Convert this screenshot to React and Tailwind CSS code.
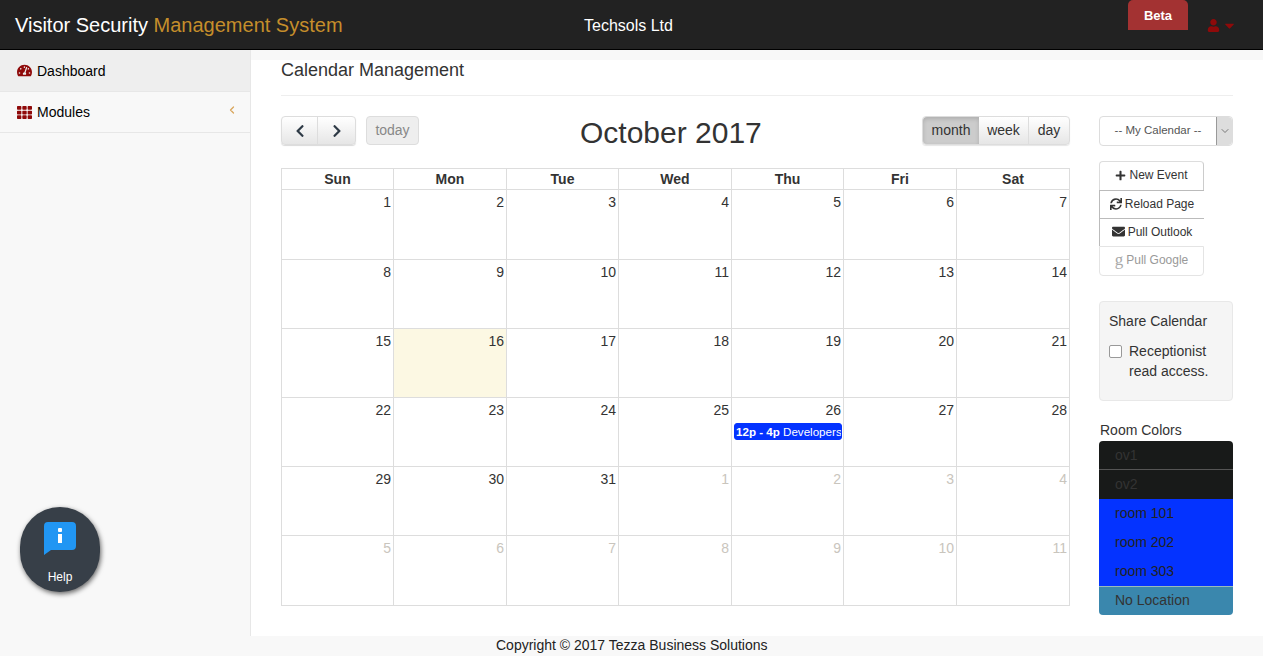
import React from 'react'
import { FaTachometerAlt, FaTh, FaUser, FaPlus, FaSync, FaEnvelope, FaChevronLeft, FaChevronRight, FaCaretDown } from 'react-icons/fa'
import { ChevronLeft, ChevronDown } from 'lucide-react'

const DAYS = ['Sun', 'Mon', 'Tue', 'Wed', 'Thu', 'Fri', 'Sat']

const WEEKS = [
  [1, 2, 3, 4, 5, 6, 7],
  [8, 9, 10, 11, 12, 13, 14],
  [15, 16, 17, 18, 19, 20, 21],
  [22, 23, 24, 25, 26, 27, 28],
  [29, 30, 31, -1, -2, -3, -4],
  [-5, -6, -7, -8, -9, -10, -11]
]

const ROOMS = [
  { name: 'ov1', cls: 'bg-[#181a19] text-[#333] border-b border-[#555]' },
  { name: 'ov2', cls: 'bg-[#181a19] text-[#333]' },
  { name: 'room 101', cls: 'bg-[#0433ff] text-[#222]' },
  { name: 'room 202', cls: 'bg-[#0433ff] text-[#222]' },
  { name: 'room 303', cls: 'bg-[#0433ff] text-[#222]' },
  { name: 'No Location', cls: 'bg-[#3a87ad] text-[#333] border-t border-[#9bb] leading-[26px]' }
]

function DayCell({ value, first, tall }) {
  const outside = value < 0
  return (
    <div className={`relative border-l border-[#ddd] pr-[2px] pt-[2px] text-right text-sm leading-5 ${tall ? 'h-[69px]' : 'h-[68px]'} ${first ? 'border-l-0' : ''} ${value === 16 ? 'bg-[#fcf8e3]' : ''} ${outside ? 'text-[#c9c5bd]' : 'text-[#333]'}`}>
      {Math.abs(value)}
      {value === 26 && (
        <div className="absolute left-[2px] top-[25px] h-[17px] w-[108px] overflow-hidden whitespace-nowrap rounded-[3px] border border-[#0433ff] bg-[#0433ff] pl-[1px] text-left text-[11.6px] leading-[15px] text-white">
          <b>12p - 4p</b> Developers
        </div>
      )}
    </div>
  )
}

function SideButton({ children, className = '' }) {
  return (
    <div className={`flex w-[105px] items-center justify-center gap-[3px] bg-white pb-[2px] text-xs text-[#333] ${className}`}>
      {children}
    </div>
  )
}

export default function App() {
  return (
    <div className="relative flex h-screen flex-col overflow-hidden bg-[#f8f8f8] font-['Liberation_Sans',Arial,sans-serif] text-sm text-[#333]">
      <header className="flex h-[50px] shrink-0 border-b border-black bg-[#222]">
        <div className="w-[584px] pl-[15px] pt-[13px] text-xl leading-6 text-white">
          Visitor Security <span className="text-[#c58e2b]">Management System</span>
        </div>
        <div className="pt-[17px] text-base leading-[18px] text-white">Techsols Ltd</div>
        <div className="ml-auto flex items-start pr-[26px]">
          <div className="h-[30px] w-[60px] rounded-t-[5px] bg-[#a33232] pt-[7px] text-center text-[13px] font-bold leading-[17px] text-white">Beta</div>
          <div className="ml-[19px] flex items-center gap-[2px] pt-[18px] text-[#8f0a0a]">
            <FaUser className="text-[13px]" />
            <FaCaretDown className="text-[15px]" />
          </div>
        </div>
      </header>

      <div className="flex min-h-0 flex-1">
        <aside className="w-[251px] shrink-0 border-r border-[#e7e7e7]">
          <div className="flex h-[42px] items-center gap-[5px] border-b border-[#e7e7e7] bg-[#eee] pl-[17px] text-black">
            <FaTachometerAlt className="text-[15px] text-[#8f0a0a]" />
            Dashboard
          </div>
          <div className="flex h-[41px] items-center gap-[5px] border-b border-[#e7e7e7] pl-[17px] text-black">
            <FaTh className="text-[15px] text-[#8f0a0a]" />
            Modules
            <ChevronLeft size={12} strokeWidth={2.5} className="ml-auto mr-[12px] mb-[5px] text-[#d9a65c]" />
          </div>
        </aside>

        <main className="mt-[10px] flex-1 bg-white pl-[30px] pr-[30px]">
          <h1 className="border-b border-[#eee] pb-[15px] text-lg leading-5 text-[#333]">Calendar Management</h1>

          <div className="mt-[20px] flex items-start gap-[29px]">
            <div className="w-[789px] shrink-0">
              <div className="relative flex h-[29px] items-start justify-between">
                <div className="flex">
                  <div className="flex h-[29px] w-[75px] rounded-[4px] border border-[#ddd] bg-gradient-to-b from-white to-[#e6e6e6] shadow-[0_1px_1px_rgba(0,0,0,0.15)]">
                    <span className="flex w-[36px] items-center justify-center border-r border-[#ddd] text-[#2e3a46]"><FaChevronLeft className="text-[14px]" /></span>
                    <span className="flex flex-1 items-center justify-center text-[#2e3a46]"><FaChevronRight className="text-[14px]" /></span>
                  </div>
                  <div className="ml-[10px] flex h-[29px] w-[53px] items-center justify-center rounded-[4px] border border-[#ddd] bg-[#eee] pb-[2px] text-[#888]">today</div>
                </div>
                <h2 className="absolute left-[299px] top-0 text-[30px] leading-[34px] text-[#333]">October 2017</h2>
                <div className="flex h-[29px] w-[148px] rounded-[4px] border border-[#ddd] bg-gradient-to-b from-white to-[#e6e6e6] text-[#333] shadow-[0_1px_1px_rgba(0,0,0,0.1)]">
                  <span className="flex w-[56px] items-center justify-center rounded-l-[4px] bg-[#ccc] pb-[2px] shadow-[inset_0_2px_4px_rgba(0,0,0,0.15)]">month</span>
                  <span className="flex w-[50px] items-center justify-center border-r border-[#ddd] pb-[2px]">week</span>
                  <span className="flex flex-1 items-center justify-center pb-[2px]">day</span>
                </div>
              </div>

              <div className="mt-[23px] border border-[#ddd]">
                <div className="grid h-[21px] grid-cols-[111px_113px_112px_113px_112px_113px_113px] border-b border-[#ddd]">
                  {DAYS.map((d, i) => (
                    <div key={d} className={`text-center font-bold leading-5 text-[#333] ${i ? 'border-l border-[#ddd]' : ''}`}>{d}</div>
                  ))}
                </div>
                {WEEKS.map((week, w) => (
                  <div key={w} className={`grid grid-cols-[111px_113px_112px_113px_112px_113px_113px] ${w ? 'border-t border-[#ddd]' : ''}`}>
                    {week.map((value, i) => (
                      <DayCell key={value} value={value} first={i === 0} tall={w === 0 || w === 5} />
                    ))}
                  </div>
                ))}
              </div>
            </div>

            <div className="w-[134px] shrink-0">
              <div className="flex h-[30px] rounded-[4px] border border-[#ddd] text-[11.5px] text-[#555]">
                <span className="flex flex-1 items-center justify-center pb-[2px]">-- My Calendar --</span>
                <span className="flex w-[16px] items-center justify-center rounded-r-[4px] border-l border-[#999] bg-[#ddd] text-[#555]"><ChevronDown size={12} strokeWidth={1.5} /></span>
              </div>

              <div className="mt-[15px]">
                <SideButton className="h-[29px] rounded-t-[4px] border-x border-t border-[#ddd] border-r-[#ccc]"><FaPlus className="text-[11px]" /> New Event</SideButton>
                <SideButton className="h-[28px] border-l border-t border-[#bbb]"><FaSync className="text-[12px]" /> Reload Page</SideButton>
                <SideButton className="h-[28px] border-l border-t border-[#bbb]"><FaEnvelope className="text-[13px]" /> Pull Outlook</SideButton>
                <SideButton className="h-[30px] rounded-b-[4px] border border-[#e4e4e4] text-[#999]"><span className="font-['Liberation_Serif',serif] text-[17px] font-light leading-3 text-[#aaa]">g</span> Pull Google</SideButton>
              </div>

              <div className="mt-[25px] h-[100px] rounded-[4px] border border-[#e8e8e8] bg-[#f5f5f5] px-[9px] pt-[9px] leading-5">
                <div>Share Calendar</div>
                <div className="mt-[10px] flex gap-[7px]">
                  <span className="mt-[4px] h-[13px] w-[13px] shrink-0 rounded-[2px] border border-[#999] bg-white"></span>
                  <span>Receptionist read access.</span>
                </div>
              </div>

              <div className="mt-[19px] pb-[1px] pl-[1px] leading-5 text-[#333]">Room Colors</div>
              <div className="overflow-hidden rounded-[4px]">
                {ROOMS.map(room => (
                  <div key={room.name} className={`h-[29px] pl-[16px] text-sm leading-7 ${room.cls}`}>{room.name}</div>
                ))}
              </div>
            </div>
          </div>
        </main>
      </div>

      <footer className="h-[20px] shrink-0 pl-[496px] text-sm leading-[18px] text-[#222]">Copyright © 2017 Tezza Business Solutions</footer>

      <div className="absolute left-[20px] top-[507px] flex h-[85px] w-[80px] flex-col items-center rounded-full bg-[#373f48] pt-[15px] shadow-[1px_2px_5px_rgba(0,0,0,0.6)]">
        <svg width="32" height="33" viewBox="0 0 32 33">
          <path d="M4 0h24a4 4 0 0 1 4 4v20a4 4 0 0 1-4 4H7l-7 5V4a4 4 0 0 1 4-4z" fill="#2196f3" />
          <rect x="14" y="6" width="4" height="4" rx="1" fill="#fff" />
          <rect x="14" y="12" width="4" height="9" fill="#fff" />
        </svg>
        <span className="mt-[14px] text-xs leading-4 text-white">Help</span>
      </div>
    </div>
  )
}
